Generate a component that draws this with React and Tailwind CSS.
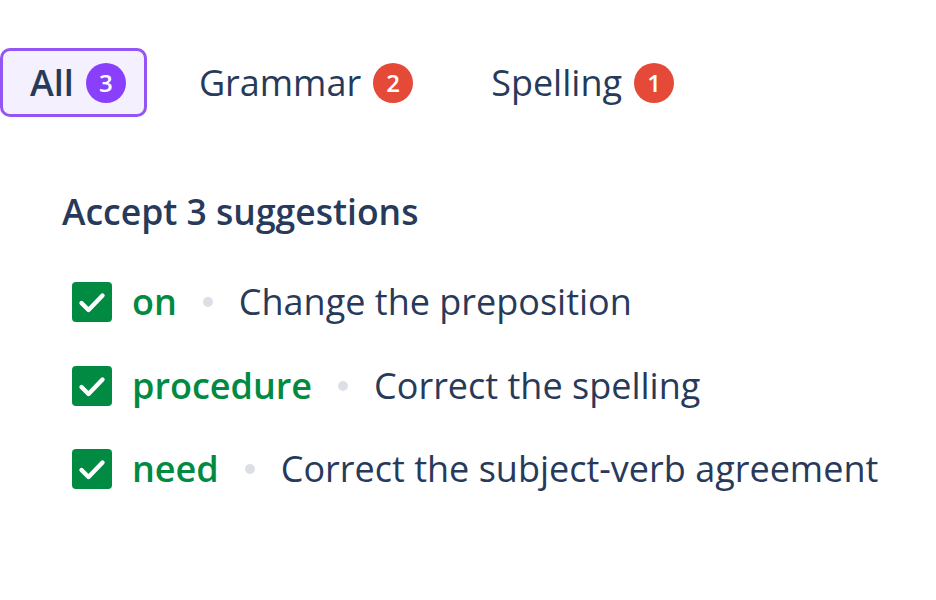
import React from "react";

const Check = () => (
  <div className="flex h-[40px] w-[40px] shrink-0 items-center justify-center rounded-[4px] bg-[#008a42]">
    <svg width="40" height="40" viewBox="0 0 40 40" fill="none">
      <path d="M9.5 21 L16.5 28 L30.5 13.5" stroke="white" strokeWidth="4.4" strokeLinecap="round" strokeLinejoin="round" />
    </svg>
  </div>
);

const Row = ({ word, text }) => (
  <div className="flex h-[40px] items-center">
    <Check />
    <span className="ml-[20px] text-[36px] font-semibold leading-none text-[#008a42]">{word}</span>
    <span className="mx-[26px] h-[10px] w-[10px] rounded-full bg-[#dcdfe5]" />
    <span className="text-[36px] leading-none text-[#283a5a]">{text}</span>
  </div>
);

const Badge = ({ n, color }) => (
  <span className={`ml-[12px] flex h-[40px] w-[40px] items-center justify-center rounded-full text-[24px] font-semibold leading-none text-white ${color}`}>
    {n}
  </span>
);

export default function App() {
  return (
    <div className="h-[600px] w-[936px] bg-white" style={{ fontFamily: '"Open Sans", sans-serif' }}>
      <div className="flex pt-[48px]">
        <div className="flex h-[69px] items-center rounded-[10px] border-[3px] border-[#9455f5] bg-[#f4f0fe] pl-[27px] pr-[18px]">
          <span className="text-[36px] font-semibold leading-none text-[#283a5a]">All</span>
          <Badge n="3" color="bg-[#8a3ffc]" />
        </div>
        <div className="ml-[22px] flex h-[69px] items-center border-[3px] border-transparent pl-[27px] pr-[18px]">
          <span className="text-[36px] leading-none text-[#283a5a]">Grammar</span>
          <Badge n="2" color="bg-[#e44a37]" />
        </div>
        <div className="ml-[27px] flex h-[69px] items-center border-[3px] border-transparent pl-[27px] pr-[18px]">
          <span className="text-[36px] leading-none text-[#283a5a]">Spelling</span>
          <Badge n="1" color="bg-[#e44a37]" />
        </div>
      </div>
      <div className="pl-[62px] pt-[72px]">
        <div className="h-[44px] text-[35.5px] font-semibold leading-[44px] text-[#283a5a]">Accept 3 suggestions</div>
      </div>
      <div className="mt-[49px] flex flex-col gap-[43.5px] pl-[72px]">
        <Row word="on" text="Change the preposition" />
        <Row word="procedure" text="Correct the spelling" />
        <Row word="need" text="Correct the subject-verb agreement" />
      </div>
    </div>
  );
}
